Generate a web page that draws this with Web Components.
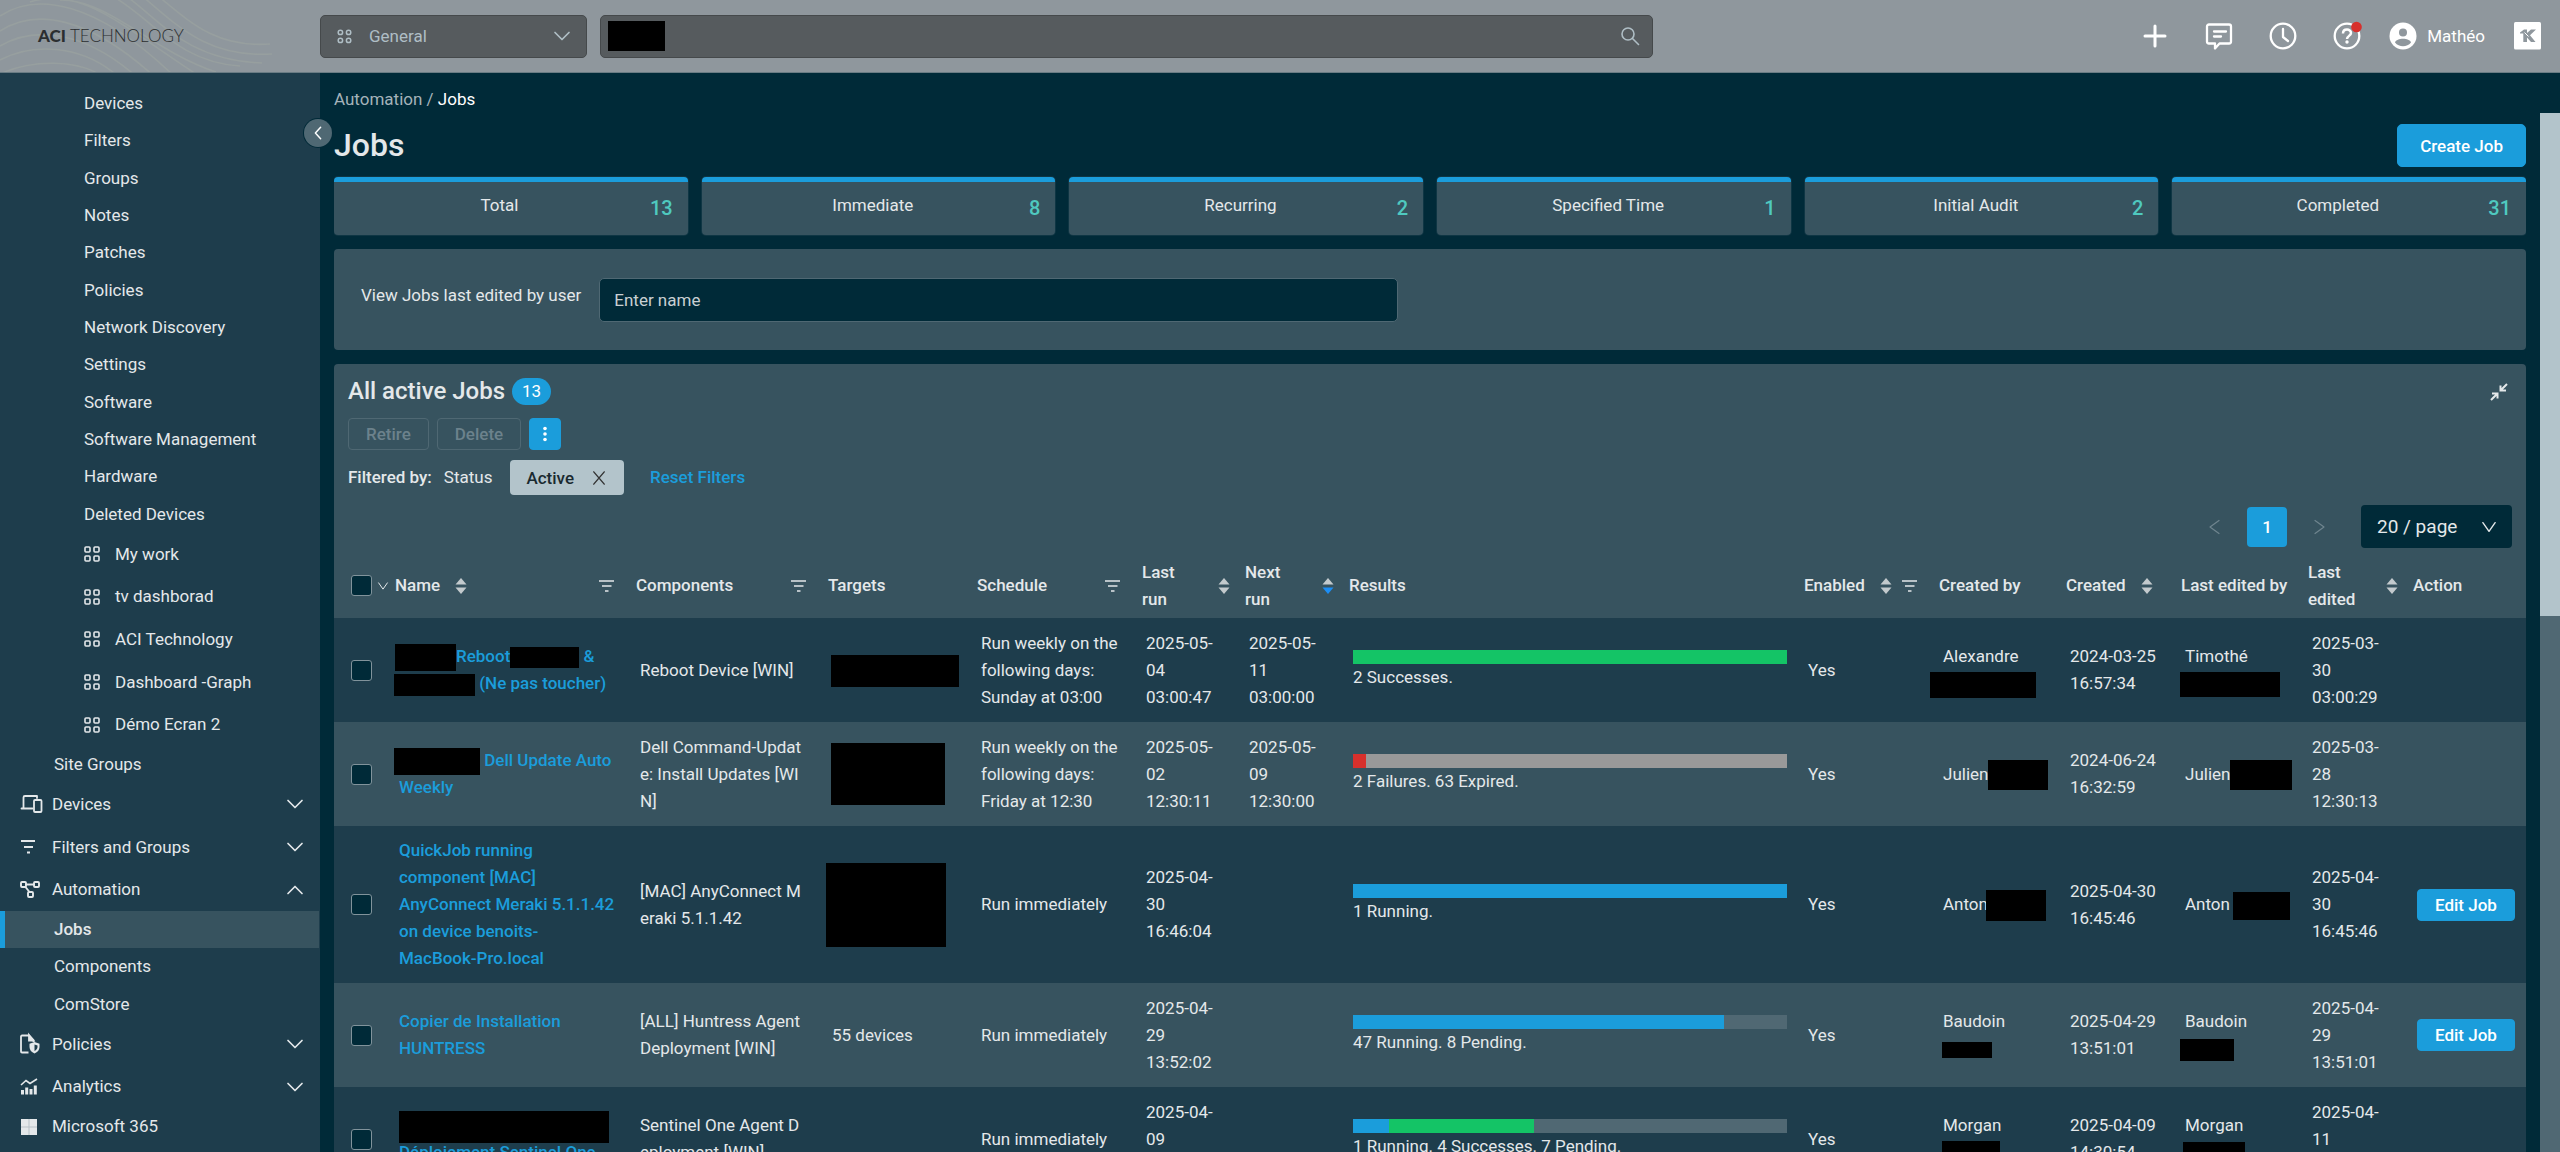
<!DOCTYPE html>
<html lang="en">
<head>
<meta charset="utf-8">
<title>Jobs - Automation</title>
<style>
  :root {
    --bg: #002a38;
    --panel: #1e3d4c;
    --card: #37535f;
    --blue: #1b9ddb;
    --text: #e4e8ea;
    --pale: #b3c4cb;
  }
  html, body { height: 100%; }
  body {
    margin: 0;
    background: var(--bg);
    color: var(--text);
    font: 400 17px/27px Roboto, "Liberation Sans", sans-serif;
    overflow: hidden;
  }
</style>
</head>
<body>
<rmm-app></rmm-app>

<script>
const define = (name, html, setup) => {
  const template = document.createElement('template');
  template.innerHTML = html;
  customElements.define(name, class extends HTMLElement {
    connectedCallback() {
      if (this.shadowRoot) return;
      const root = this.attachShadow({ mode: 'open' });
      root.append(template.content.cloneNode(true));
      if (setup) setup(this, root);
    }
  });
};

/* ---------- icons ---------- */
const line = (d, w = 1.5, box = '0 0 24 24') =>
  `<svg viewBox="${box}" fill="none" stroke="currentColor" stroke-width="${w}" stroke-linecap="round" stroke-linejoin="round">${d}</svg>`;
const ICONS = {
  circles: line('<circle cx="3.4" cy="3.4" r="2.2"/><circle cx="11.6" cy="3.4" r="2.2"/><circle cx="3.4" cy="11.4" r="2.2"/><circle cx="11.6" cy="11.4" r="2.2"/>', 1.5, '0 0 15 15'),
  squares: line('<rect x="1" y="1" width="5" height="5" rx="1"/><rect x="10" y="1" width="5" height="5" rx="1"/><rect x="1" y="10" width="5" height="5" rx="1"/><rect x="10" y="10" width="5" height="5" rx="1"/>', 1.6, '0 0 16 16'),
  down: line('<path d="M1 4.5l7 7 7-7"/>', 1.7, '0 0 16 16'),
  up: line('<path d="M1 11.5l7-7 7 7"/>', 1.7, '0 0 16 16'),
  left: line('<path d="M11 1.5L5 8l6 6.500"/>', 1.7, '0 0 16 16'),
  thinleft: line('<path d="M12 1.500L3 8l9 6.500"/>', 1.2, '0 0 16 16'),
  thinright: line('<path d="M4 1.500l9 6.500-9 6.500"/>', 1.2, '0 0 16 16'),
  vee: line('<path d="M1 3l7 10 7-10"/>', 1.6, '0 0 16 16'),
  search: line('<circle cx="8" cy="8" r="6"/><path d="M12.500 12.500l6 6"/>', 1.6, '0 0 20 20'),
  plus: line('<path d="M14 4v20M4 14h20"/>', 3, '0 0 28 28'),
  chat: line('<path d="M4 2.500h20a2 2 0 0 1 2 2v15a2 2 0 0 1-2 2h-9.500l-4.500 5v-5h-6a2 2 0 0 1-2-2v-15a2 2 0 0 1 2-2z"/><path d="M9 9.500h12M9 14.500h7"/>', 2.3, '0 0 28 28'),
  clock: line('<circle cx="14" cy="14" r="12.300"/><path d="M14 7v8l5 4"/>', 2.3, '0 0 28 28'),
  help: `<svg viewBox="0 0 28 28" fill="none" stroke="currentColor" stroke-width="2.300"><circle cx="14" cy="14" r="12.300"/><path d="M10 11.500c0-5.200 8-5 8 -.5 0 2.800-4 3-4 6" stroke-linecap="butt" stroke-width="2.500"/><circle cx="14" cy="20" r="1.700" fill="currentColor" stroke="none"/><circle cx="23.500" cy="5" r="5.300" fill="#d7302c" stroke="none"/></svg>`,
  avatar: `<svg viewBox="0 0 28 28"><circle cx="14" cy="14" r="13.500" fill="#fff"/><circle cx="14" cy="10.500" r="4" fill="#8f979d"/><path d="M6 20.500c1.500-5 14.500-5 16 0-4 5-12 5-16 0z" fill="#8f979d"/></svg>`,
  brand: `<svg viewBox="0 0 28 28"><rect width="27" height="27.500" rx="1.500" fill="#fff"/><path fill="#8f979d" d="M6 10.500l4-3h3v3.500l4-3.500h5l-6 5.700 5.500 6.800h-4.500l-4-4.500v4.500h-3.700v-8.500H6z"/><path d="M10.500 10.500l4 4" stroke="#fff" stroke-width="1"/></svg>`,
  devices: line('<path d="M1.500 14.500h11M3.500 14V3.500a1.500 1.500 0 0 1 1.500-1.500h12M17 2v2"/><rect x="14" y="6" width="7.500" height="12" rx="1"/>', 1.8, '0 0 23 20'),
  filters: line('<path d="M1 3h14M4 9h9M7 14.500h3" stroke-linecap="butt"/>', 1.8, '0 0 20 18'),
  filter: line('<path d="M0 2h15M3 7h9.500M6 12h3.500" stroke-linecap="butt"/>', 1.6, '0 0 15 14'),
  automation: line('<rect x="1" y="2" width="5" height="5" rx="1"/><rect x="14" y="2" width="5" height="5" rx="1"/><rect x="8" y="12" width="5" height="5" rx="1"/><path d="M6 4.500h8M5.500 7l4 5"/>', 1.9, '0 0 20 19'),
  policies: `<svg viewBox="0 0 20 20" fill="none" stroke="currentColor" stroke-width="1.800"><path d="M8.500 18.500H2a1 1 0 0 1-1-1v-15a1 1 0 0 1 1-1h7l4.500 4.500v2"/><path d="M9 1v5.500h4.500z" fill="currentColor"/><path d="M14.500 8l5 1.800v3.200c0 3-2 5.200-5 6.500-3-1.300-5-3.500-5-6.500V9.800z" fill="currentColor" stroke="none"/><path d="M14.500 10.500v6.500c1.700-1 3-2.200 3-4v-1.500z" fill="#1e3d4c" stroke="none"/></svg>`,
  analytics: `<svg viewBox="0 0 18 18" fill="none" stroke="currentColor" stroke-width="1.600"><path d="M1 7l5-4.500 4 3L17 1"/><path d="M2.500 12v4.500M6.700 9.500v7M11 11v5.500M15.300 7.500v9" stroke-width="3"/></svg>`,
  windows: `<svg viewBox="0 0 18 18"><path fill="#e4e8ea" d="M1 1h16v16H1z"/><path d="M9 1v16M1 9h16" stroke="#b9c2c8" stroke-width="1"/></svg>`,
  dots: `<svg viewBox="0 0 16 16" fill="currentColor"><circle cx="8" cy="2.500" r="1.800"/><circle cx="8" cy="8" r="1.800"/><circle cx="8" cy="13.500" r="1.800"/></svg>`,
  close: line('<path d="M2 1l12 14M14 1l-12 14"/>', 1.6, '0 0 16 16'),
  shrink: `<svg viewBox="0 0 18 18" fill="none" stroke="currentColor" stroke-width="2"><path d="M17 1l-6.500 6.500M10.500 2.500v5h5.500M1 17l6.500-6.500M7.500 15.500v-5H2"/></svg>`,
  sort: `<svg viewBox="0 0 12 18"><path d="M6 1l5.500 6.500H.5z" fill="#c3cacd"/><path d="M6 17l5.500-6.500H.5z" fill="#c3cacd"/></svg>`,
  sortdown: `<svg viewBox="0 0 12 18"><path d="M6 1l5.500 6.500H.5z" fill="#c3cacd"/><path d="M6 17l5.500-6.500H.5z" fill="#1c8ef5"/></svg>`
};
define('ui-icon', `<style>
  :host { display: inline-block; flex: none; width: 16px; height: 16px; }
  svg { display: block; width: 100%; height: 100%; overflow: visible; }
</style>`, (el, root) => root.append(document.createRange().createContextualFragment(ICONS[el.getAttribute('name')])));

/* ---------- blacked-out text ---------- */
define('ui-redacted', `<style>
  :host { display: inline-block; vertical-align: middle; background: #000; margin-top: -8px; margin-bottom: -8px; }
</style>`, el => {
  el.style.width = el.getAttribute('w') + 'px';
  el.style.height = el.getAttribute('h') + 'px';
});

/* ---------- top bar ---------- */
define('top-bar', `<style>
  :host { display: flex; height: 72px; background: #8f979d; border-bottom: 1px solid #6a7c84; }
  .brand { position: relative; width: 320px; flex: none; display: flex; align-items: center; overflow: hidden; }
  .brand svg { position: absolute; inset: 0; width: 100%; height: 100%; }
  .brand p { margin: 0 0 0 38px; font: 300 17px/24px Lato, sans-serif; color: #2b2e30; position: relative; }
  .brand b { font-weight: 900; }
  .tools { flex: 1; display: flex; align-items: center; padding-right: 18px; }
  .field { display: flex; align-items: center; box-sizing: border-box; height: 43px; border: 1px solid #45494b; border-radius: 5px; background: #565b5e; color: #afbec5; }
  .pick { width: 267px; padding: 0 16px; margin-right: 13px; }
  select { appearance: none; flex: 1; min-width: 0; font: inherit; color: inherit; background: none; border: 0; padding: 0; margin-left: 17px; outline: 0; }
  .find { width: 1053px; padding: 0 12px 0 7px; }
  .find input { flex: 1; min-width: 0; background: none; border: 0; outline: 0; font: inherit; color: inherit; }
  nav { margin-left: auto; display: flex; align-items: center; color: #fff; }
  button { all: unset; display: flex; align-items: center; margin-right: 36px; cursor: pointer; }
  button ui-icon { width: 28px; height: 28px; }
  .help { margin-right: 28px; }
  .user { gap: 10px; margin-right: 29px; }
  .pages { margin: 0; }
</style>
<div class="brand">
  <svg viewBox="0 0 320 72" fill="none" stroke="#979f9f" stroke-width="1.600">
    <path d="M0 74C30 60 78 58 105 78M0 60C30 44 80 42 120 78M0 46C34 26 84 30 138 78M0 31C36 8 88 16 156 78M0 16C36-8 96 0 176 78M30 2C80-14 120 24 196 74M60 0C110 0 150 50 216 72M112-4C150 16 176 62 240 66M126-4C160 20 186 60 262 63M142-4C176 24 206 58 272 54M158-4C190 22 216 48 270 44"/>
  </svg>
  <p><b>ACI</b> TECHNOLOGY</p>
</div>
<div class="tools">
  <div class="field pick"><ui-icon name="circles" style="width:15px;height:15px"></ui-icon>
    <select aria-label="Dashboard"><option>General</option></select><ui-icon name="down"></ui-icon></div>
  <div class="field find"><ui-redacted w="57" h="30"></ui-redacted><input type="search" aria-label="Search"><ui-icon name="search" style="width:20px;height:20px"></ui-icon></div>
  <nav aria-label="Account">
    <button aria-label="Add"><ui-icon name="plus"></ui-icon></button>
    <button aria-label="Messages"><ui-icon name="chat"></ui-icon></button>
    <button aria-label="Recent"><ui-icon name="clock"></ui-icon></button>
    <button class="help" aria-label="Help"><ui-icon name="help"></ui-icon></button>
    <button class="user"><ui-icon name="avatar"></ui-icon><span>Mathéo</span></button>
    <button class="pages" aria-label="Modules"><ui-icon name="brand"></ui-icon></button>
  </nav>
</div>`);

/* ---------- side navigation ---------- */
define('nav-item', `<style>
  :host { flex: 1; display: flex; }
  a { flex: 1; display: flex; align-items: center; color: inherit; text-decoration: none; padding: 0 16px 0 54px; margin-right: 1px; }
  .slot { display: none; }
  .arrow { margin-left: auto; }
  :host([level="2"]) a { padding-left: 84px; }
  :host([level="0"]) a { padding-left: 20px; }
  :host([level="0"]) .slot { display: flex; width: 32px; }
  :host([level="2"]) .slot.on { display: flex; width: 31px; }
  :host([current]) a { background: var(--card); font-weight: 500; box-shadow: inset 5px 0 var(--blue); }
</style><a href="#"><span class="slot"></span><slot></slot></a>`, (el, root) => {
  const icon = el.getAttribute('icon'), arrow = el.getAttribute('arrow');
  const sizes = { devices: [23, 20], filters: [20, 18], automation: [20, 19], policies: [20, 20], analytics: [18, 18], windows: [18, 18] };
  if (icon) {
    const [w, h] = sizes[icon] || [16, 16];
    const s = root.querySelector('.slot');
    s.classList.add('on');
    s.innerHTML = `<ui-icon name="${icon}" style="width:${w}px;height:${h}px"></ui-icon>`;
  }
  if (arrow) root.querySelector('a').insertAdjacentHTML('beforeend', `<ui-icon class="arrow" name="${arrow}"></ui-icon>`);
  if (el.hasAttribute('current')) root.querySelector('a').setAttribute('aria-current', 'page');
});

define('side-nav', `<style>
  :host { display: block; position: relative; background: var(--panel); }
  nav { padding-top: 12px; }
  .g { display: flex; flex-direction: column; }
  button { position: absolute; top: 46px; right: -12px; width: 28px; height: 28px; padding: 0; border: 0; border-radius: 50%; background: #4f6873; color: #fff; display: grid; place-items: center; box-shadow: 0 0 0 1px var(--bg); }
  button ui-icon { width: 14px; height: 14px; }
</style>
<nav aria-label="Main">
  <div class="g" style="height:448px">
    <nav-item level="2">Devices</nav-item><nav-item level="2">Filters</nav-item><nav-item level="2">Groups</nav-item>
    <nav-item level="2">Notes</nav-item><nav-item level="2">Patches</nav-item><nav-item level="2">Policies</nav-item>
    <nav-item level="2">Network Discovery</nav-item><nav-item level="2">Settings</nav-item><nav-item level="2">Software</nav-item>
    <nav-item level="2">Software Management</nav-item><nav-item level="2">Hardware</nav-item><nav-item level="2">Deleted Devices</nav-item>
  </div>
  <div class="g" style="height:213px">
    <nav-item level="2" icon="squares">My work</nav-item><nav-item level="2" icon="squares">tv dashborad</nav-item>
    <nav-item level="2" icon="squares">ACI Technology</nav-item><nav-item level="2" icon="squares">Dashboard -Graph</nav-item>
    <nav-item level="2" icon="squares">Démo Ecran 2</nav-item>
  </div>
  <div class="g" style="height:37px"><nav-item level="1">Site Groups</nav-item></div>
  <div class="g" style="height:128px">
    <nav-item level="0" icon="devices" arrow="down">Devices</nav-item>
    <nav-item level="0" icon="filters" arrow="down">Filters and Groups</nav-item>
    <nav-item level="0" icon="automation" arrow="up">Automation</nav-item>
  </div>
  <div class="g" style="height:112px">
    <nav-item level="1" current>Jobs</nav-item><nav-item level="1">Components</nav-item><nav-item level="1">ComStore</nav-item>
  </div>
  <div class="g" style="height:85px">
    <nav-item level="0" icon="policies" arrow="down">Policies</nav-item>
    <nav-item level="0" icon="analytics" arrow="down">Analytics</nav-item>
  </div>
  <div class="g" style="height:37px"><nav-item level="0" icon="windows">Microsoft 365</nav-item></div>
</nav>
<button aria-label="Collapse menu"><ui-icon name="left"></ui-icon></button>`);

/* ---------- buttons, stats, filter panel ---------- */
define('ui-button', `<style>
  :host { display: inline-flex; }
  button { flex: 1; box-sizing: border-box; height: 32px; padding: 0 17px; border: 1px solid var(--blue); border-radius: 4px; background: var(--blue); color: #fff; font: 500 17px/20px Roboto, sans-serif; display: flex; align-items: center; justify-content: center; white-space: nowrap; }
  :host([large]) button { height: 43px; padding: 0 22px; border-radius: 5px; }
  :host([muted]) button { background: none; border-color: #4f6873; color: #6c828c; }
  :host([square]) button { width: 32px; padding: 0; }
</style><button><slot></slot></button>`, (el, root) => {
  if (el.hasAttribute('muted')) root.querySelector('button').disabled = true;
  if (el.getAttribute('label')) root.querySelector('button').setAttribute('aria-label', el.getAttribute('label'));
});

define('stat-card', `<style>
  :host { flex: 1; box-sizing: border-box; height: 58px; display: flex; align-items: center; padding: 0 15px; background: var(--card); border-top: 5px solid var(--blue); border-radius: 4px; box-shadow: 0 0 0 1px #0f3644; }
  .label { flex: 1; text-align: center; padding-bottom: 6px; }
  .n { font-size: 20px; font-weight: 500; color: #4fc9bf; }
</style><span class="label"><slot></slot></span><span class="n"><slot name="n"></slot></span>`);

define('edited-filter', `<style>
  :host { display: grid; grid-template-columns: auto 14fr 19fr; column-gap: 18px; align-items: center; box-sizing: border-box; height: 101px; padding: 0 27px; background: var(--card); border-radius: 4px; }
  label { padding-bottom: 8px; }
  input { box-sizing: border-box; width: 100%; height: 44px; padding: 0 14px; font: inherit; color: inherit; background: var(--bg); border: 1px solid #4f6873; border-radius: 5px; outline: 0; }
  input::placeholder { color: #c9d0d3; opacity: 1; }
</style><label for="user">View Jobs last edited by user</label><input id="user" placeholder="Enter name">`);

/* ---------- result bar ---------- */
define('result-bar', `<style>
  :host { display: block; }
  .bar { display: flex; height: 14px; background: #506873; }
</style><div class="bar"></div><slot></slot>`, (el, root) => {
  root.querySelector('.bar').innerHTML = el.getAttribute('parts').split(' ').map(p => {
    const [colour, n] = p.split(':');
    return `<i style="flex:${n};background:${colour}"></i>`;
  }).join('');
});

/* ---------- jobs table ---------- */
const R = (w, h, m = 0) => `<ui-redacted w="${w}" h="${h}" style="margin-left:${m}px"></ui-redacted>`;
const JOBS = [
  { name: `${R(61, 27, -4)}Reboot${R(69, 21)} &amp;<br>${R(81, 22, -5)} (Ne pas toucher)`,
    comp: 'Reboot Device [WIN]', target: R(128, 32, -1),
    sched: 'Run weekly on the<br>following days:<br>Sunday at 03:00', last: '2025-05-<br>04<br>03:00:47', next: '2025-05-<br>11<br>03:00:00',
    parts: '#14c466:1', result: '2 Successes.', by: `Alexandre<br>${R(106, 26, -13)}`, created: '2024-03-25<br>16:57:34',
    eby: `Timothé<br>${R(100, 25, -5)}`, edited: '2025-03-<br>30<br>03:00:29' },
  { name: `${R(86, 27, -5)} Dell Update Auto<br>Weekly`,
    comp: 'Dell Command-Updat<br>e: Install Updates [WI<br>N]', target: R(114, 62, -1),
    sched: 'Run weekly on the<br>following days:<br>Friday at 12:30', last: '2025-05-<br>02<br>12:30:11', next: '2025-05-<br>09<br>12:30:00',
    parts: '#d7302c:2 #999999:63', result: '2 Failures. 63 Expired.', by: `Julien${R(60, 30)}`, created: '2024-06-24<br>16:32:59',
    eby: `Julien${R(62, 30)}`, edited: '2025-03-<br>28<br>12:30:13' },
  { name: 'QuickJob running<br>component [MAC]<br>AnyConnect Meraki 5.1.1.42<br>on device benoits-<br>MacBook-Pro.local',
    comp: '[MAC] AnyConnect M<br>eraki 5.1.1.42', target: R(120, 84, -6),
    sched: 'Run immediately', last: '2025-04-<br>30<br>16:46:04', next: '',
    parts: '#1b9ddb:1', result: '1 Running.', by: `Anton${R(60, 31, -2)}`, created: '2025-04-30<br>16:45:46',
    eby: `Anton${R(57, 28, 3)}`, edited: '2025-04-<br>30<br>16:45:46', edit: true },
  { name: 'Copier de Installation<br>HUNTRESS', comp: '[ALL] Huntress Agent<br>Deployment [WIN]', target: '55 devices',
    sched: 'Run immediately', last: '2025-04-<br>29<br>13:52:02', next: '',
    parts: '#1b9ddb:47 #506873:8', result: '47 Running. 8 Pending.', by: `Baudoin<br>${R(50, 16, -1)}`, created: '2025-04-29<br>13:51:01',
    eby: `Baudoin<br>${R(54, 22, -5)}`, edited: '2025-04-<br>29<br>13:51:01', edit: true },
  { name: `${R(210, 32)}<br>Déploiement Sentinel One`, comp: 'Sentinel One Agent D<br>eployment [WIN]', target: '',
    sched: 'Run immediately', last: '2025-04-<br>09<br>14:32:10', next: '',
    parts: '#1b9ddb:1 #14c466:4 #506873:7', result: '1 Running. 4 Successes. 7 Pending.', by: `Morgan<br>${R(58, 26, -1)}`, created: '2025-04-09<br>14:30:54',
    eby: `Morgan<br>${R(62, 24, -2)}`, edited: '2025-04-<br>11<br>09:12:40' }
];
const HEADS = [
  ['Name', 241, 'sort', 'filter'], ['Components', 192, '', 'filter'], ['Targets', 149], ['Schedule', 165, '', 'filter'],
  ['Last<br>run', 103, 'sort'], ['Next<br>run', 104, 'sortdown'], ['Results', 0], ['Enabled', 135, 'sort', 'filter'],
  ['Created by', 127], ['Created', 115, 'sort'], ['Last edited by', 127], ['Last<br>edited', 105, 'sort'], ['Action', 120]
];
define('jobs-table', `<style>
  :host { display: block; }
  table { width: 100%; table-layout: fixed; border-collapse: collapse; }
  th { height: 65px; padding: 0 8px 0 7px; font-weight: 500; text-align: left; }
  th > div { display: flex; align-items: center; gap: 15px; }
  th.wide span { flex: 1; }
  th:first-child, td:first-child { padding: 0 0 0 17px; }
  th:first-child > div { gap: 6px; }
  .sort { width: 12px; height: 18px; }
  .filter { width: 15px; height: 14px; margin: 0 7px 0 auto; }
  .close .filter { margin-left: -5px; }
  .menu { width: 10px; height: 10px; }
  tbody tr { background: var(--panel); }
  tbody tr:nth-child(even) { background: var(--card); }
  td { padding: 11px 10px 11px 11px; white-space: nowrap; vertical-align: middle; }
  td:last-child { padding-right: 0; }
  a { color: var(--blue); text-decoration: none; font-weight: 500; }
  input { appearance: none; display: block; flex: none; box-sizing: border-box; width: 21px; height: 21px; margin: 0; border: 1px solid #81939b; border-radius: 3px; background: var(--bg); }
  td:first-child { height: 104px; }
</style>
<table><colgroup></colgroup><thead><tr></tr></thead><tbody></tbody></table>`, (el, root) => {
  root.querySelector('colgroup').innerHTML = '<col style="width:54px">' +
    HEADS.map(([, w]) => w ? `<col style="width:${w}px">` : '<col>').join('');
  root.querySelector('thead tr').innerHTML =
    '<th><div><input type="checkbox" aria-label="Select all"><ui-icon class="menu" name="vee"></ui-icon></div></th>' +
    HEADS.map(([t, , sort, filter]) => `<th class="${t.includes('<br>') ? 'wide' : ''}${t === 'Enabled' ? 'close' : ''}"><div><span>${t}</span>${
      sort ? `<ui-icon class="sort" name="${sort}"></ui-icon>` : ''}${filter ? '<ui-icon class="filter" name="filter"></ui-icon>' : ''}</div></th>`).join('');
  root.querySelector('tbody').innerHTML = JOBS.map((j, i) => `<tr>
    <td><input type="checkbox" aria-label="Select job ${i + 1}"></td><td><a href="#">${j.name}</a></td><td>${j.comp}</td><td>${j.target}</td>
    <td>${j.sched}</td><td>${j.last}</td><td>${j.next}</td><td><result-bar parts="${j.parts}">${j.result}</result-bar></td><td>Yes</td>
    <td>${j.by}</td><td>${j.created}</td><td>${j.eby}</td><td>${j.edited}</td><td>${j.edit ? '<ui-button>Edit Job</ui-button>' : ''}</td></tr>`).join('');
});

define('jobs-card', `<style>
  :host { display: block; background: var(--card); border-radius: 4px; padding-top: 14px; }
  .row { display: flex; align-items: center; padding: 0 14px; }
  h2 { margin: 0; font-size: 24px; font-weight: 500; }
  .count { margin-left: 7px; padding: 0 10px; border-radius: 14px; background: var(--blue); color: #fff; }
  .shrink { all: unset; margin: 0 4px 0 auto; height: 20px; }
  .shrink ui-icon { width: 18px; height: 18px; }
  .actions { gap: 8px; margin: 13px 0 10px; }
  b { font-weight: 500; margin-right: 12px; }
  .chip { display: flex; align-items: center; gap: 18px; height: 35px; padding: 0 18px 0 16px; margin: 0 26px 0 18px; border: 0; border-radius: 4px; background: var(--pale); color: #1a2a30; font: 500 17px/20px Roboto, sans-serif; }
  .chip ui-icon { width: 14px; height: 14px; color: #333; }
  a { color: var(--blue); text-decoration: none; font-weight: 500; }
  .pager { justify-content: flex-end; margin: 10px 0 5px; height: 43px; }
  .arrow { all: unset; display: flex; color: #6f858f; }
  .pager .num { box-sizing: border-box; width: 40px; height: 40px; margin: 0 24px; border: 0; border-radius: 4px; background: var(--blue); color: #fff; font: 500 17px/20px Roboto, sans-serif; }
  .size { display: flex; align-items: center; box-sizing: border-box; width: 151px; height: 43px; padding: 0 16px; margin-left: 34px; border-radius: 4px; background: var(--bg); }
  .size select { appearance: none; flex: 1; min-width: 0; padding: 0; border: 0; background: none; color: inherit; font: inherit; font-size: 19px; outline: 0; }
  .size ui-icon { width: 14px; height: 14px; }
</style>
<div class="row"><h2>All active Jobs</h2><span class="count">13</span><button class="shrink" aria-label="Collapse"><ui-icon name="shrink"></ui-icon></button></div>
<div class="row actions"><ui-button muted>Retire</ui-button><ui-button muted>Delete</ui-button><ui-button square label="More"><ui-icon name="dots"></ui-icon></ui-button></div>
<div class="row"><b>Filtered by:</b><span>Status</span><button class="chip">Active<ui-icon name="close"></ui-icon></button><a href="#">Reset Filters</a></div>
<div class="row pager"><button class="arrow" aria-label="Previous"><ui-icon name="thinleft"></ui-icon></button><button class="num">1</button><button class="arrow" aria-label="Next"><ui-icon name="thinright"></ui-icon></button>
  <div class="size"><select aria-label="Page size"><option>20 / page</option></select><ui-icon name="vee"></ui-icon></div></div>
<jobs-table></jobs-table>`);

/* ---------- page ---------- */
define('jobs-page', `<style>
  :host { display: grid; grid-template-columns: minmax(0, 1fr) 20px; grid-template-rows: 40px minmax(0, 1fr); column-gap: 14px; padding-left: 14px; min-height: 0; overflow: hidden; }
  .crumbs { grid-column: 1 / 3; padding-top: 13px; }
  .crumbs a { color: #a5b3ba; text-decoration: none; }
  .crumbs span { color: #fff; }
  .view { overflow: hidden; }
  .title { display: flex; align-items: center; justify-content: space-between; padding: 11px 0 10px; }
  h1 { margin: 0; font-size: 32px; line-height: 43px; font-weight: 500; }
  .stats { display: flex; gap: 14px; }
  .stats b { font-weight: inherit; }
  edited-filter { margin: 14px 0; }
  .scroll { background: #506873; }
  .scroll i { display: block; height: 48.400%; background: var(--pale); }
</style>
<div class="crumbs"><a href="#">Automation /</a> <span>Jobs</span></div>
<div class="view">
  <div class="title"><h1>Jobs</h1><ui-button large>Create Job</ui-button></div>
  <div class="stats">
    <stat-card>Total<b slot="n">13</b></stat-card>
    <stat-card>Immediate<b slot="n">8</b></stat-card>
    <stat-card>Recurring<b slot="n">2</b></stat-card>
    <stat-card>Specified Time<b slot="n">1</b></stat-card>
    <stat-card>Initial Audit<b slot="n">2</b></stat-card>
    <stat-card>Completed<b slot="n">31</b></stat-card>
  </div>
  <edited-filter></edited-filter>
  <jobs-card></jobs-card>
</div>
<div class="scroll"><i></i></div>`);

define('rmm-app', `<style>
  :host { display: grid; grid-template: 73px minmax(0, 1fr) / 320px minmax(0, 1fr); height: 100vh; }
  top-bar { grid-column: 1 / 3; }
  side-nav { z-index: 1; }
</style><top-bar></top-bar><side-nav></side-nav><jobs-page></jobs-page>`);
</script>
</body>
</html>
